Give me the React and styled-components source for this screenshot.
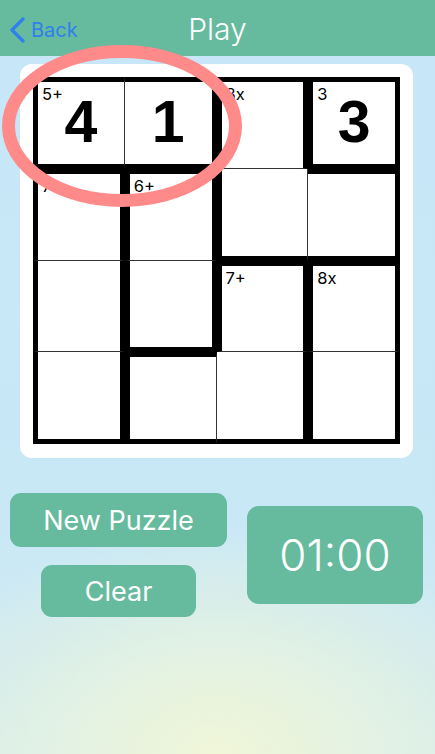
import React from 'react'
import styled, { createGlobalStyle } from 'styled-components'

const GlobalStyle = createGlobalStyle`
  * { box-sizing: border-box; }
  html, body { margin: 0; padding: 0; }
  body {
    font-family: Inter, "Liberation Sans", sans-serif;
    background: #c7e7f9;
  }
`

const Page = styled.div`
  position: relative;
  width: 435px;
  height: 754px;
  overflow: hidden;
  background:
    radial-gradient(ellipse 320px 230px at 50% 100%, #f0f6d8 0%, rgba(232, 244, 222, 0.75) 45%, rgba(199, 231, 249, 0) 100%),
    linear-gradient(#c7e7f9, #c9e8f6 70%, #d6ecee);
  display: flex;
  flex-direction: column;
`

const Header = styled.header`
  height: 56px;
  background: #66ba9e;
  display: grid;
  grid-template-columns: 1fr auto 1fr;
  align-items: center;
`

const BackButton = styled.div`
  display: flex;
  align-items: center;
  gap: 6px;
  padding-left: 9px;
  padding-top: 4px;
  color: #2f80ed;
  font-size: 20px;
`

const Title = styled.h1`
  margin: 0;
  padding-top: 2px;
  font-size: 30px;
  font-weight: 300;
  color: #ffffff;
`

const Card = styled.div`
  margin: 8px 0 0 20px;
  width: 393px;
  height: 394px;
  padding: 13px;
  background: #ffffff;
  border-radius: 12px;
`

const Board = styled.div`
  width: 367px;
  height: 367px;
  display: grid;
  grid-template-columns: repeat(4, 1fr);
  grid-template-rows: repeat(4, 1fr);
`

const side = (thick, thin) => (thick ? '5px solid #000' : thin ? '1px solid #333' : 'none')

const Cell = styled.div`
  position: relative;
  background: #fff;
  border-top: ${p => side(p.$t, false)};
  border-left: ${p => side(p.$l, false)};
  border-right: ${p => side(p.$r, true)};
  border-bottom: ${p => side(p.$b, true)};
  display: flex;
  align-items: center;
  justify-content: center;
  font-family: "Liberation Sans", Arial, sans-serif;
`

const CageLabel = styled.span`
  position: absolute;
  top: 3px;
  left: 4px;
  font-family: Inter, "Liberation Sans", sans-serif;
  font-size: 16.5px;
  line-height: 18px;
  color: #000;
`

const Value = styled.span`
  font-size: 59px;
  font-weight: 700;
  color: #000;
  line-height: 1;
`

const Controls = styled.div`
  margin-top: 35px;
  padding-left: 10px;
  display: flex;
  align-items: center;
  gap: 20px;
`

const ButtonColumn = styled.div`
  width: 217px;
  display: flex;
  flex-direction: column;
  align-items: center;
  gap: 18px;
`

const GreenButton = styled.button`
  width: ${p => p.$w}px;
  height: ${p => p.$h}px;
  border: none;
  border-radius: 11px;
  background: #66ba9e;
  color: #fff;
  font-family: Inter, "Liberation Sans", sans-serif;
  font-size: 27px;
  font-weight: 400;
  padding: 0;
`

const Timer = styled.div`
  width: 176px;
  height: 98px;
  border-radius: 12px;
  background: #66ba9e;
  color: #fff;
  font-size: 44px;
  font-weight: 300;
  display: flex;
  align-items: center;
  justify-content: center;
`

const Highlight = styled.svg`
  position: absolute;
  left: 0;
  top: 40px;
  pointer-events: none;
`

const cages = [
  ['A', 'A', 'B', 'C'],
  ['D', 'E', 'B', 'B'],
  ['D', 'E', 'F', 'G'],
  ['D', 'F', 'F', 'G'],
]

const labels = {
  '0-0': '5+',
  '0-2': '3x',
  '0-3': '3',
  '1-0': '7+',
  '1-1': '6+',
  '2-2': '7+',
  '2-3': '8x',
}

const values = { '0-0': '4', '0-1': '1', '0-3': '3' }

const differs = (r, c, r2, c2) =>
  r2 < 0 || c2 < 0 || r2 > 3 || c2 > 3 || cages[r][c] !== cages[r2][c2]

const App = () => {
  const cells = []
  for (let r = 0; r < 4; r++) {
    for (let c = 0; c < 4; c++) {
      const key = `${r}-${c}`
      cells.push(
        <Cell
          key={key}
          $t={differs(r, c, r - 1, c)}
          $l={differs(r, c, r, c - 1)}
          $r={differs(r, c, r, c + 1)}
          $b={differs(r, c, r + 1, c)}
        >
          {labels[key] && <CageLabel>{labels[key]}</CageLabel>}
          {values[key] && <Value>{values[key]}</Value>}
        </Cell>
      )
    }
  }

  return (
    <Page>
      <GlobalStyle />
      <Header>
        <BackButton>
          <svg width="16" height="26" viewBox="0 0 16 26">
            <polyline points="14,2 3,13 14,24" fill="none" stroke="#2f80ed" strokeWidth="3.2" strokeLinecap="round" strokeLinejoin="round" />
          </svg>
          Back
        </BackButton>
        <Title>Play</Title>
        <div />
      </Header>
      <Card>
        <Board>{cells}</Board>
      </Card>
      <Controls>
        <ButtonColumn>
          <GreenButton $w={217} $h={54}>New Puzzle</GreenButton>
          <GreenButton $w={155} $h={52}>Clear</GreenButton>
        </ButtonColumn>
        <Timer>01:00</Timer>
      </Controls>
      <Highlight width="250" height="175" viewBox="0 0 250 175">
        <ellipse cx="122" cy="86" rx="113.5" ry="74.5" fill="none" stroke="#ff8a8a" strokeWidth="13" />
      </Highlight>
    </Page>
  )
}

export default App
